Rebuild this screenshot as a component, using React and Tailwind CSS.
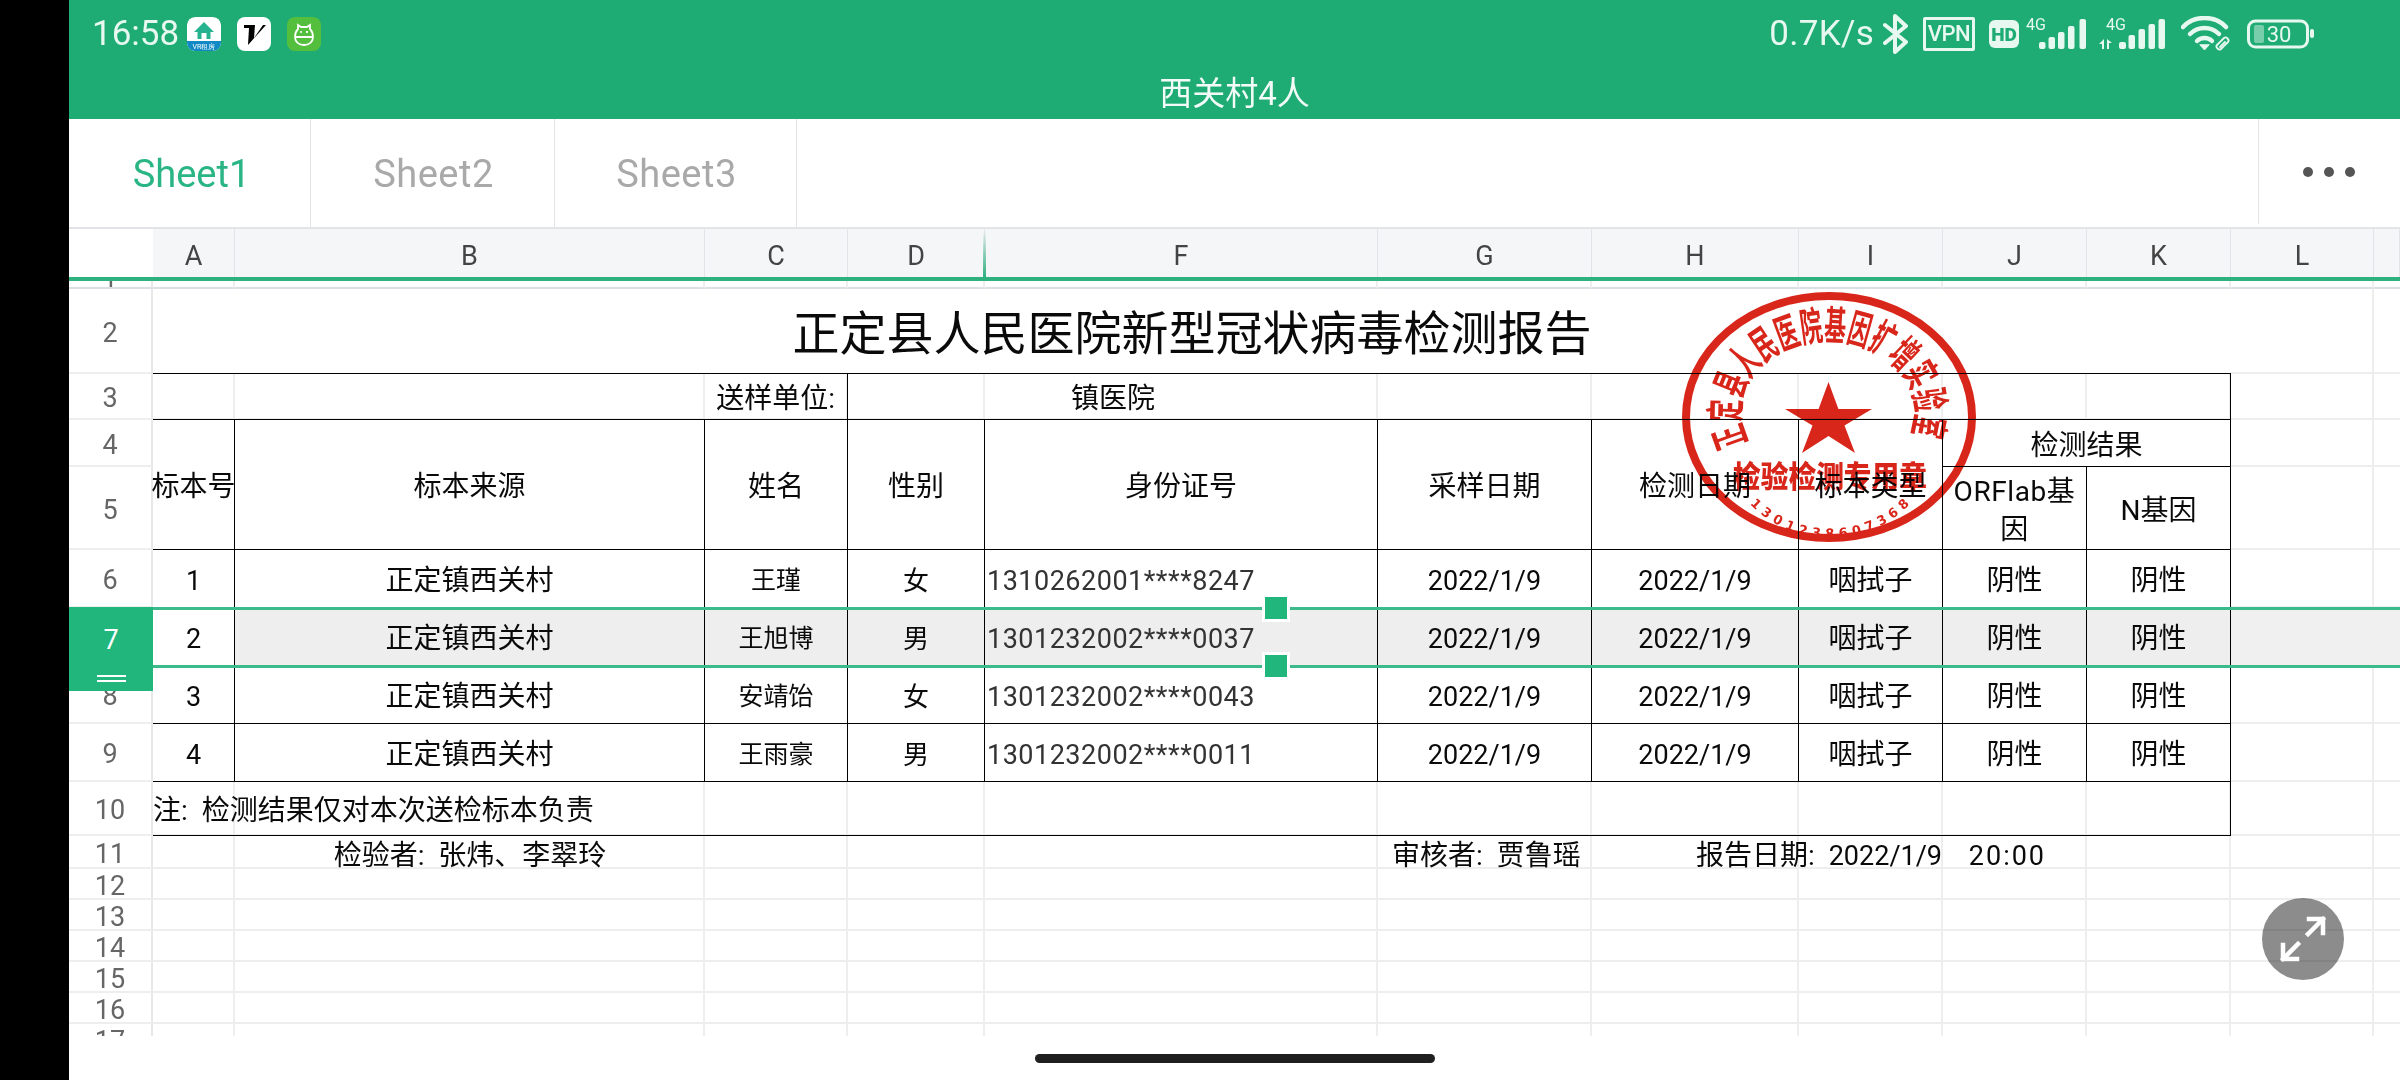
import React from "react";

const FONT = "font-[Roboto,'Noto_Sans_CJK_SC',sans-serif]";
const COLS = "grid-cols-[84px_82px_470px_143px_137px_393px_214px_207px_144px_144px_144px_143px_26px]";
const ROWS = "grid-rows-[8px_85px_46px_47px_83px_58px_58px_58px_58px_54px_33px_31px_31px_31px_31px_31px_12px]";
const LETTERS = ["", "A", "B", "C", "D", "F", "G", "H", "I", "J", "K", "L", ""];
const ROW_NUMS = Array.from({ length: 17 }, (_, i) => i + 1);

const ROW_CLASS = {
  6: "row-start-6",
  7: "row-start-7",
  8: "row-start-8",
  9: "row-start-9",
};

const DATA = [
  { r: 6, n: "1", name: "王瑾", sex: "女", id: "1310262001****8247" },
  { r: 7, n: "2", name: "王旭博", sex: "男", id: "1301232002****0037" },
  { r: 8, n: "3", name: "安靖饴", sex: "女", id: "1301232002****0043" },
  { r: 9, n: "4", name: "王雨豪", sex: "男", id: "1301232002****0011" },
];

const line = "border-r border-b border-black";
const center = "flex items-center justify-center text-center pt-[5px]";

function Signal({ arrows }) {
  return (
    <svg width={arrows ? 67 : 60} height="36" viewBox={arrows ? "0 0 67 36" : "0 0 60 36"} fill="#e6f8f0">
      {arrows ? (
        <g>
          <text x="7" y="14" fontSize="16" fontFamily="Roboto">4G</text>
          <path d="M0 28l5-5v10H3v-5zM8 23v10l2 0 0-6 3 0z" />
          <rect x="20" y="26" width="7" height="7" rx="2" />
          <rect x="29.500" y="19" width="6.500" height="14" rx="2" />
          <rect x="39.500" y="13" width="6.500" height="20" rx="2" />
          <rect x="49.500" y="8" width="6.500" height="25" rx="2" />
          <rect x="59.500" y="3" width="6.500" height="30" rx="2" />
        </g>
      ) : (
        <g>
          <text x="0" y="14" fontSize="16" fontFamily="Roboto">4G</text>
          <rect x="13" y="26" width="6.500" height="7" rx="2" />
          <rect x="22.500" y="21" width="6.500" height="12" rx="2" />
          <rect x="32" y="16" width="6.500" height="17" rx="2" />
          <rect x="42" y="10" width="6.500" height="23" rx="2" />
          <rect x="53.500" y="3" width="6.500" height="30" rx="2" />
        </g>
      )}
    </svg>
  );
}

function StatusBar() {
  return (
    <div className="flex h-[68px] items-center pl-[23px] pr-[86px] text-[#e6f8f0]">
      <span className="w-[95px] text-[35px] leading-[44px]">16:58</span>
      <svg width="34" height="34" viewBox="0 0 34 34" className="rounded-[8px]">
        <rect width="34" height="34" rx="8" fill="#ffffff" />
        <path d="M0 24h34v2a8 8 0 0 1-8 8H8a8 8 0 0 1-8-8z" fill="#1189c4" />
        <path d="M17 5L7 15h3.500v7h13v-7H27z" fill="#25b48f" />
        <rect x="14.500" y="16" width="5" height="6" fill="#ffffff" />
        <text x="17" y="32" textAnchor="middle" fontSize="7" fill="#ffffff" fontFamily="Roboto">VR租房</text>
      </svg>
      <svg width="34" height="34" viewBox="0 0 34 34" className="ml-[16px]">
        <rect width="34" height="34" rx="8" fill="#ffffff" />
        <path d="M7 8h11l-1 13 9-13h3L11 28l1-17H7z" fill="#000000" />
      </svg>
      <svg width="34" height="34" viewBox="0 0 34 34" className="ml-[16px]">
        <rect width="34" height="34" rx="8" fill="#54bf3c" />
        <path d="M11 12V8l3 2h6l3-2v4c2 2 3 5 3 8 0 5-4 8-9 8s-9-3-9-8c0-3 1-6 3-8zM8 20h18" fill="none" stroke="#ffffff" strokeWidth="1.800" />
        <path d="M13 15h2M19 15h2M20 14v2" stroke="#ffffff" strokeWidth="1.500" />
      </svg>
      <span className="ml-auto text-[35px] leading-[44px] tracking-[0.3px]">0.7K/s</span>
      <svg width="25" height="40" viewBox="0 0 25 40" className="ml-[9px]" fill="none" stroke="#e6f8f0" strokeWidth="4" strokeLinejoin="round" strokeLinecap="round">
        <path d="M2 11l21 17-11 10V2l11 10L2 29" />
      </svg>
      <div className="ml-[15px] flex h-[34px] w-[52px] items-center justify-center rounded-[2px] border-[3px] border-[#e6f8f0] text-[22px] font-medium leading-none tracking-[-0.5px]">
        VPN
      </div>
      <div className="ml-[14px] flex h-[28px] w-[30px] items-center justify-center rounded-[6px] bg-[#e6f8f0] text-[19px] font-black leading-none text-[#1eac74]">
        HD
      </div>
      <div className="ml-[7px]"><Signal /></div>
      <div className="ml-[13px]"><Signal arrows /></div>
      <svg width="51" height="36" viewBox="0 0 51 36" className="ml-[15px]" fill="none" stroke="#e6f8f0" strokeWidth="4.500" strokeLinecap="round">
        <path d="M2 11C13 -1 34 -1 45 11" />
        <path d="M9 18c8-8 21-8 29 0" />
        <path d="M16 25c4-4 11-4 15 0" />
        <path d="M19 29l4.500 5 4.500-5z" fill="#e6f8f0" strokeWidth="1" />
        <path d="M40 25l3-3c2-2 6 2 4 4l-3 3M43 30l-3 3c-2 2-6-2-4-4l3-3M39 31l5-5" strokeWidth="1.800" />
      </svg>
      <svg width="69" height="30" viewBox="0 0 69 30" className="ml-[13px]">
        <rect x="3.500" y="2" width="59" height="26" rx="7" fill="none" stroke="#e6f8f0" strokeWidth="3" />
        <rect x="9" y="6" width="10" height="18" rx="2" fill="#e6f8f0" opacity="0.45" />
        <text x="34" y="23" textAnchor="middle" fontSize="22" fill="#e6f8f0" fontFamily="Roboto">30</text>
        <rect x="65" y="10" width="4" height="9" rx="2" fill="#e6f8f0" />
      </svg>
    </div>
  );
}

function Tabs() {
  return (
    <div className="flex h-[110px] border-b-2 border-[#e2e4e7] bg-white">
      <div className="flex w-[242px] items-center justify-center border-r border-[#e4e4e4] pl-[4px] pt-[2px] text-[38px] text-[#2ab585]">Sheet1</div>
      <div className="flex w-[244px] items-center justify-center border-r border-[#e4e4e4] pl-[2px] pt-[2px] text-[38px] tracking-[0.5px] text-[#a9a9a9]">Sheet2</div>
      <div className="flex w-[242px] items-center justify-center border-r border-[#e4e4e4] pl-[2px] pt-[2px] text-[38px] tracking-[0.5px] text-[#a9a9a9]">Sheet3</div>
      <div className="ml-auto mb-[3px] flex w-[142px] items-center justify-center gap-[11px] border-l border-[#e4e4e4] pr-[2px]">
        <span className="h-[10px] w-[10px] rounded-full bg-[#555555]" />
        <span className="h-[10px] w-[10px] rounded-full bg-[#555555]" />
        <span className="h-[10px] w-[10px] rounded-full bg-[#555555]" />
      </div>
    </div>
  );
}

function ColumnHeader() {
  return (
    <div className={`relative grid h-[52px] ${COLS} border-b-4 border-[#2fb07f]`}>
      {LETTERS.map((l, i) => (
        <div
          key={i}
          className={
            i === 0
              ? "bg-white"
              : "flex items-center justify-center border-r border-[#e2e4e7] bg-[#f5f6f8] pt-[7px] text-[27px] text-[#444444]"
          }
        >
          {l}
        </div>
      ))}
      <div className="absolute bottom-0 left-[914px] h-[46px] w-[3px] bg-linear-to-t from-[#2fb07f] to-transparent" />
    </div>
  );
}

function GridLayer() {
  return (
    <div className={`grid ${COLS} ${ROWS} bg-white`}>
      {ROW_NUMS.map((r) =>
        LETTERS.map((_, c) => {
          if (c === 0) {
            return (
              <div
                key={`${r}-${c}`}
                className={`flex justify-center overflow-hidden border-r-2 border-[#e8e8e8] text-[27px] leading-none text-[#666666] ${
                  r === 1 ? "items-end border-b-2 border-b-[#dcdfe3]" : r === 17 ? "items-start" : "items-center border-b-2 border-b-[#eeeeee] pt-[5px]"
                }`}
              >
                <span className={r === 1 ? "translate-y-[13px]" : r === 17 ? "translate-y-[4px]" : ""}>{r}</span>
              </div>
            );
          }
          return (
            <div
              key={`${r}-${c}`}
              className={`${c === 12 ? "" : "border-r-2"} border-[#eeeeee] ${
                r === 17 ? "" : r === 1 ? "border-b-2 border-b-[#dcdfe3]" : "border-b-2"
              }`}
            />
          );
        })
      )}
    </div>
  );
}

function TableLayer() {
  return (
    <div className={`absolute inset-0 grid ${COLS} ${ROWS} text-[28px] leading-[38px] text-[#0a0a0a]`}>
      <div className={`col-start-2 col-span-10 row-start-2 ${center} border-b border-black bg-white text-[47px] leading-none`}>
        正定县人民医院新型冠状病毒检测报告
      </div>

      <div className="col-start-2 col-span-3 row-start-3 flex items-center justify-end whitespace-pre border-r border-b border-black pr-[5px] pt-[5px]">送样单位: </div>
      <div className={`col-start-5 col-span-2 row-start-3 ${center} border-b border-black`}>镇医院</div>
      <div className="col-start-7 col-span-5 row-start-3 border-r border-b border-black" />

      <div className={`col-start-2 row-start-4 row-span-2 ${center} ${line} whitespace-nowrap bg-white`}>标本号</div>
      <div className={`col-start-3 row-start-4 row-span-2 ${center} ${line} bg-white`}>标本来源</div>
      <div className={`col-start-4 row-start-4 row-span-2 ${center} ${line} bg-white`}>姓名</div>
      <div className={`col-start-5 row-start-4 row-span-2 ${center} ${line} bg-white`}>性别</div>
      <div className={`col-start-6 row-start-4 row-span-2 ${center} ${line} bg-white`}>身份证号</div>
      <div className={`col-start-7 row-start-4 row-span-2 ${center} ${line} bg-white`}>采样日期</div>
      <div className={`col-start-8 row-start-4 row-span-2 ${center} ${line} bg-white`}>检测日期</div>
      <div className={`col-start-9 row-start-4 row-span-2 ${center} ${line} bg-white`}>标本类型</div>
      <div className={`col-start-10 col-span-2 row-start-4 ${center} ${line} bg-white`}>检测结果</div>
      <div className={`col-start-10 row-start-5 ${center} ${line} bg-white`}>
        <span className="tracking-[0.6px]">ORFlab基<br />因</span>
      </div>
      <div className={`col-start-11 row-start-5 ${center} ${line} bg-white`}>N基因</div>

      {DATA.map((d) => {
        const selected = d.r === 7;
        const bg = selected ? "bg-[#eeeeee]" : "bg-white";
        const row = ROW_CLASS[d.r];
        return (
          <React.Fragment key={d.r}>
            <div className={`col-start-2 ${row} ${center} ${line} bg-white text-[27px]`}>{d.n}</div>
            <div className={`col-start-3 ${row} ${center} ${line} ${bg}`}>正定镇西关村</div>
            <div className={`col-start-4 ${row} ${center} ${line} ${bg} text-[25px]`}>{d.name}</div>
            <div className={`col-start-5 ${row} ${center} ${line} ${bg} text-[26px]`}>{d.sex}</div>
            <div className={`col-start-6 ${row} flex items-center ${line} ${bg} pl-[2px] pt-[5px] text-[27px] tracking-[0.5px] text-[#333333]`}>{d.id}</div>
            <div className={`col-start-7 ${row} ${center} ${line} ${bg} text-[27px]`}>2022/1/9</div>
            <div className={`col-start-8 ${row} ${center} ${line} ${bg} text-[27px]`}>2022/1/9</div>
            <div className={`col-start-9 ${row} ${center} ${line} ${bg}`}>咽拭子</div>
            <div className={`col-start-10 ${row} ${center} ${line} ${bg}`}>阴性</div>
            <div className={`col-start-11 ${row} ${center} ${line} ${bg}`}>阴性</div>
            {selected && <div className="col-start-12 col-span-2 row-start-7 bg-[#f0f0f0]" />}
          </React.Fragment>
        );
      })}

      <div className="col-start-2 col-span-10 row-start-10 flex items-center whitespace-pre border-r border-b border-black pt-[5px]">注:  检测结果仅对本次送检标本负责</div>

      <div className="col-start-3 row-start-11 flex items-center justify-center whitespace-pre pt-[6px]">检验者:  张炜、李翠玲</div>
      <div className="col-start-7 row-start-11 flex items-center whitespace-pre pl-[14px] pt-[6px]">审核者:  贾鲁瑶</div>
      <div className="col-start-8 col-span-4 row-start-11 flex items-center whitespace-pre pl-[104px] pt-[6px]">
        报告日期:  <span className="text-[27px]">2022/1/9    <span className="tracking-[2px]">20:00</span></span>
      </div>
    </div>
  );
}

function Stamp() {
  const red = "#d9261a";
  return (
    <svg
      width="300"
      height="260"
      viewBox="0 0 300 260"
      className="absolute left-[1611px] top-[6px] mix-blend-multiply"
      fontFamily="'Noto Sans CJK SC', sans-serif"
      fill={red}
    >
      <defs>
        <path id="stampTop" d="M68 155A88 72 0 1 1 230 151" />
        <path id="stampBottom" d="M70 217A113 116 0 0 0 230 217" />
      </defs>
      <ellipse cx="149" cy="130" rx="143" ry="121" fill="none" stroke={red} strokeWidth="8" />
      <text fontSize="40" fontWeight="700">
        <textPath href="#stampTop" textLength="306" lengthAdjust="spacingAndGlyphs">正定县人民医院基因扩增实验室</textPath>
      </text>
      <polygon points="148.500,95 158.400,122 192,122 164.500,138.600 175,166 148.500,149 122,166 132.500,138.600 105,122 138.600,122" />
      <text x="53" y="200" fontSize="30" fontWeight="900" textLength="194" lengthAdjust="spacingAndGlyphs">检验检测专用章</text>
      <text fontSize="13" fontWeight="700" fontFamily="'DejaVu Sans', sans-serif">
        <textPath href="#stampBottom" textLength="178" lengthAdjust="spacing">1301238607368</textPath>
      </text>
    </svg>
  );
}

function Selection() {
  return (
    <>
      <div className="absolute left-[84px] right-0 top-[326px] h-[3px] bg-[#3dba8c]" />
      <div className="absolute left-[84px] right-0 top-[384px] h-[3px] bg-[#3dba8c]" />
      <div className="absolute left-0 top-[326px] flex h-[84px] w-[84px] flex-col items-center bg-[#20b67c] text-white">
        <span className="mt-[17px] text-[27px] leading-[32px]">7</span>
        <span className="mt-[19px] h-[2px] w-[29px] bg-white" />
        <span className="mt-[3px] h-[2px] w-[29px] bg-white" />
      </div>
      <div className="absolute left-[1193px] top-[313px] h-[28px] w-[28px] border-[3px] border-white bg-[#20b67c]" />
      <div className="absolute left-[1193px] top-[371px] h-[28px] w-[28px] border-[3px] border-white bg-[#20b67c]" />
    </>
  );
}

function FloatButton() {
  return (
    <div className="absolute left-[2193px] top-[617px] flex h-[82px] w-[82px] items-center justify-center rounded-full bg-black/45">
      <svg width="46" height="46" viewBox="0 0 46 46" fill="none" stroke="#ffffff" strokeWidth="4.500" strokeLinecap="round">
        <path d="M28 18L43 3M29 3h14v14" strokeLinejoin="miter" strokeLinecap="square" />
        <path d="M18 28L3 43M3 29v14h14" strokeLinejoin="miter" strokeLinecap="square" />
      </svg>
    </div>
  );
}

export default function App() {
  return (
    <div className={`flex h-[1080px] w-[2400px] overflow-hidden bg-black ${FONT}`}>
      <div className="w-[69px] shrink-0 bg-black" />
      <main className="flex min-w-0 flex-1 flex-col bg-white">
        <header className="h-[119px] bg-[#1eac74]">
          <StatusBar />
          <div className="flex h-[51px] items-start justify-center text-[33px] leading-[52px] text-[#f2fbf7]">西关村4人</div>
        </header>
        <Tabs />
        <ColumnHeader />
        <section className="relative">
          <GridLayer />
          <TableLayer />
          <Stamp />
          <Selection />
          <FloatButton />
        </section>
        <footer className="flex flex-1 items-center justify-center pt-[1px]">
          <div className="h-[9px] w-[400px] rounded-full bg-[#1f1f1f]" />
        </footer>
      </main>
    </div>
  );
}
